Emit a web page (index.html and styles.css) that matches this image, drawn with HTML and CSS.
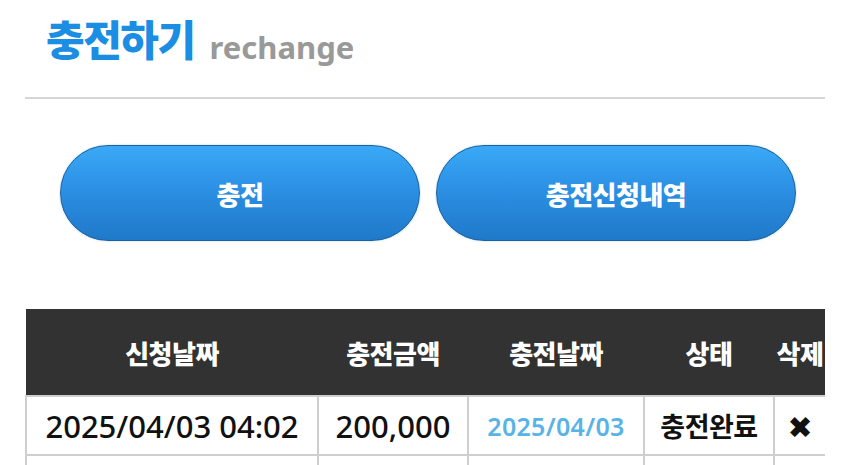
FILE: index.html
```html
<!DOCTYPE html>
<html lang="ko">
<head>
<meta charset="utf-8">
<title>충전하기</title>
<link rel="stylesheet" href="styles.css">
</head>
<body>
<div class="page">
  <header class="page-head">
    <h1 class="title">충전하기<span class="title-en">rechange</span></h1>
  </header>

  <nav class="tabs">
    <a class="tab-btn" href="#">충전</a>
    <a class="tab-btn" href="#">충전신청내역</a>
  </nav>

  <div class="table-wrap">
    <table class="history">
      <colgroup>
        <col class="c-req"><col class="c-amt"><col class="c-date"><col class="c-state"><col class="c-del">
      </colgroup>
      <thead>
        <tr>
          <th>신청날짜</th>
          <th>충전금액</th>
          <th>충전날짜</th>
          <th>상태</th>
          <th class="del">삭제</th>
        </tr>
      </thead>
      <tbody>
        <tr>
          <td>2025/04/03 04:02</td>
          <td>200,000</td>
          <td class="done-date">2025/04/03</td>
          <td class="state">충전완료</td>
          <td class="del"><span class="x">✖</span></td>
        </tr>
        <tr class="blank">
          <td></td><td></td><td></td><td></td><td class="del"></td>
        </tr>
      </tbody>
    </table>
  </div>
</div>
</body>
</html>
```

FILE: styles.css
```css
html, body {
  margin: 0;
  padding: 0;
  background: #fff;
}

body {
  font-family: "Noto Sans CJK KR", "Noto Sans", sans-serif;
  color: #111;
  overflow: hidden;
}

.page {
  width: 800px;
  padding: 0 25px;
}

/* page title with underline */
.page-head {
  border-bottom: 2px solid #d6d6d6;
  height: 99px;
  box-sizing: border-box;
  padding: 11px 0 0 21px;
}

.title {
  margin: 0;
  font-size: 42px;
  font-weight: 900;
  line-height: 54px;
  color: #1b8de2;
  letter-spacing: -1.5px;
  white-space: nowrap;
}

.title-en {
  display: inline-block;
  margin-left: 15px;
  vertical-align: -3px;
  font-family: "Noto Sans", sans-serif;
  font-size: 31px;
  font-weight: 700;
  color: #999;
  letter-spacing: 0;
}

/* two pill buttons */
.tabs {
  display: flex;
  gap: 16px;
  padding: 46px 0 0 35px;
}

.tab-btn {
  width: 360px;
  height: 96px;
  box-sizing: border-box;
  border-radius: 48px;
  border: 1.5px solid #1d5f9c;
  background: linear-gradient(#3aa9f6 0%, #2c90e4 45%, #1f79c9 100%);
  box-shadow: 0 0 2px rgba(90, 170, 230, 0.5);
  display: flex;
  align-items: center;
  justify-content: center;
  color: #fff;
  font-size: 26px;
  font-weight: 900;
  text-decoration: none;
  letter-spacing: -0.5px;
}

/* history table */
.table-wrap {
  margin-top: 68px;
  width: 800px;
  overflow: hidden;
}

.history {
  width: 800px;
  border-collapse: collapse;
  table-layout: fixed;
}

.c-req { width: 292px; }
.c-amt { width: 150px; }
.c-date { width: 176px; }
.c-state { width: 130px; }
.c-del { width: 52px; }

.history th {
  height: 86px;
  padding: 0;
  background: #323232;
  color: #fff;
  font-size: 26px;
  font-weight: 900;
  letter-spacing: -0.5px;
  text-align: center;
  white-space: nowrap;
}

.history td {
  height: 57px;
  padding: 0;
  border: 2px solid #cfcfcf;
  text-align: center;
  font-family: "Noto Sans", "Noto Sans CJK KR", sans-serif;
  font-size: 31px;
  font-weight: 500;
  color: #111;
  white-space: nowrap;
}

.history td.done-date {
  font-size: 25px;
  font-weight: 600;
  color: #5ab3e6;
  letter-spacing: 0.3px;
}

.history td.state {
  font-family: "Noto Sans CJK KR", sans-serif;
  font-size: 27px;
  font-weight: 700;
  letter-spacing: -0.5px;
}

.history .x {
  font-family: "DejaVu Sans", sans-serif;
  font-size: 30px;
  font-weight: 700;
}

.history tr.blank td {
  height: 40px;
}
```
